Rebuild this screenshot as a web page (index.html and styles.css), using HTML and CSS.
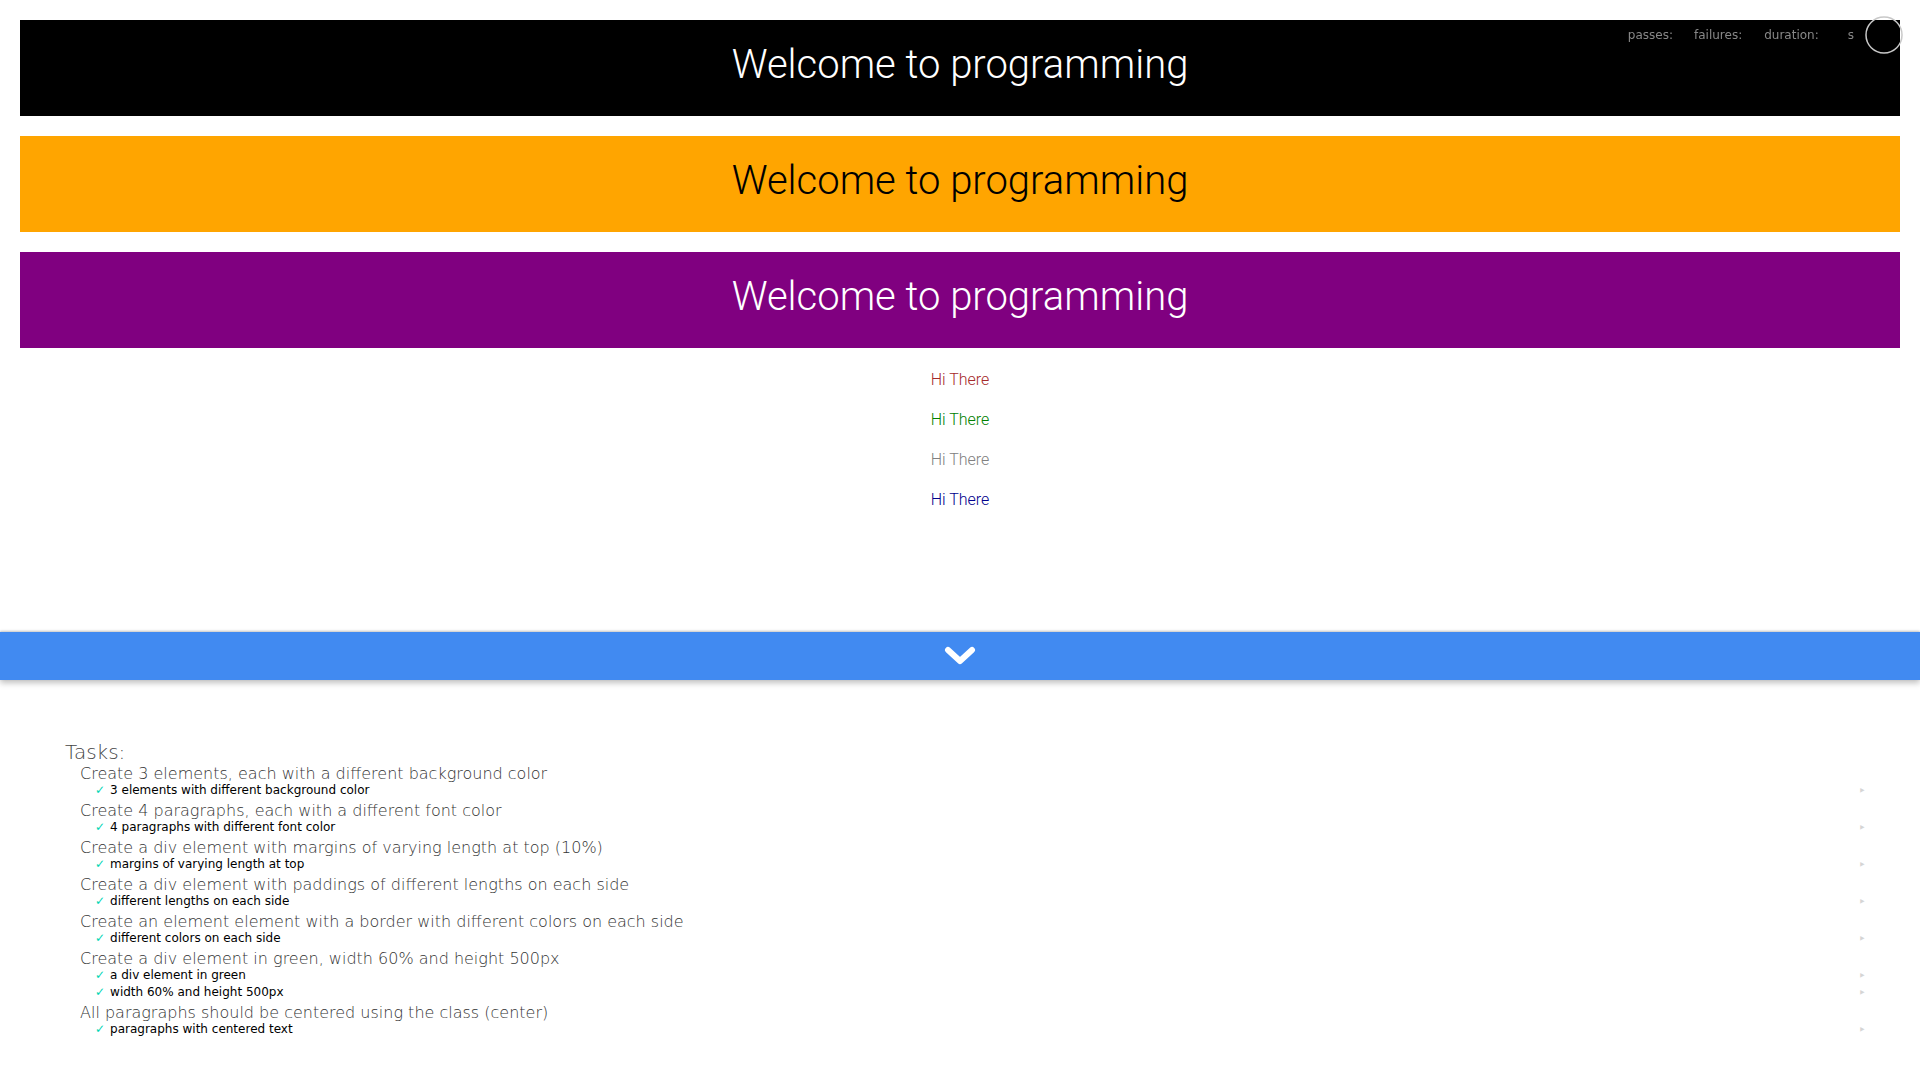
FILE: index.html
```html
<!DOCTYPE html>
<html lang="en">
<head>
<meta charset="utf-8">
<title>Welcome to programming</title>
<link rel="stylesheet" href="styles.css">
</head>
<body>
<main class="content">
  <div class="box box-black">Welcome to programming</div>
  <div class="box box-orange">Welcome to programming</div>
  <div class="box box-purple">Welcome to programming</div>
  <p class="center hi hi-brown">Hi There</p>
  <p class="center hi hi-green">Hi There</p>
  <p class="center hi hi-gray">Hi There</p>
  <p class="center hi hi-blue">Hi There</p>
</main>

<div class="toggle-bar">
  <svg class="chevron" width="32" height="20" viewBox="0 0 32 20" aria-hidden="true">
    <polyline points="4,4 16,15 28,4" fill="none" stroke="#fff" stroke-width="6" stroke-linecap="round" stroke-linejoin="round"/>
  </svg>
</div>

<section class="mocha">
  <h1 class="tasks-title">Tasks:</h1>
  <ul class="suites">
    <li class="suite">
      <h2 class="suite-title">Create 3 elements, each with a different background color</h2>
      <ul class="tests">
        <li class="test"><span class="test-name">3 elements with different background color</span><span class="replay">‣</span></li>
      </ul>
    </li>
    <li class="suite">
      <h2 class="suite-title">Create 4 paragraphs, each with a different font color</h2>
      <ul class="tests">
        <li class="test"><span class="test-name">4 paragraphs with different font color</span><span class="replay">‣</span></li>
      </ul>
    </li>
    <li class="suite">
      <h2 class="suite-title">Create a div element with margins of varying length at top (10%)</h2>
      <ul class="tests">
        <li class="test"><span class="test-name">margins of varying length at top</span><span class="replay">‣</span></li>
      </ul>
    </li>
    <li class="suite">
      <h2 class="suite-title">Create a div element with paddings of different lengths on each side</h2>
      <ul class="tests">
        <li class="test"><span class="test-name">different lengths on each side</span><span class="replay">‣</span></li>
      </ul>
    </li>
    <li class="suite">
      <h2 class="suite-title">Create an element element with a border with different colors on each side</h2>
      <ul class="tests">
        <li class="test"><span class="test-name">different colors on each side</span><span class="replay">‣</span></li>
      </ul>
    </li>
    <li class="suite">
      <h2 class="suite-title">Create a div element in green, width 60% and height 500px</h2>
      <ul class="tests">
        <li class="test"><span class="test-name">a div element in green</span><span class="replay">‣</span></li>
        <li class="test"><span class="test-name">width 60% and height 500px</span><span class="replay">‣</span></li>
      </ul>
    </li>
    <li class="suite">
      <h2 class="suite-title">All paragraphs should be centered using the class (center)</h2>
      <ul class="tests">
        <li class="test"><span class="test-name">paragraphs with centered text</span><span class="replay">‣</span></li>
      </ul>
    </li>
  </ul>
</section>

<div class="stats">
  <span class="stat stat-passes">passes:</span>
  <span class="stat stat-failures">failures:</span>
  <span class="stat stat-duration">duration:</span>
  <span class="stat stat-s">s</span>
  <svg class="progress" width="38" height="38" viewBox="0 0 38 38" aria-hidden="true">
    <circle cx="19" cy="19" r="18" fill="none" stroke="#c8c8c8" stroke-width="1.5"/>
  </svg>
</div>
</body>
</html>
```

FILE: styles.css
```css
html, body {
  margin: 0;
  padding: 0;
  background: #fff;
}

body {
  font-family: Roboto, "Liberation Sans", sans-serif;
  color: #000;
}

.box {
  margin: 20px;
  height: 96px;
  box-sizing: border-box;
  padding-top: 17px;
  font-family: Roboto, sans-serif;
  font-weight: 300;
  font-size: 40px;
  line-height: 56px;
  text-align: center;
}

.box-black { background: #000; color: #fff; }
.box-orange { background: #ffa500; color: #000; }
.box-purple { background: #800080; color: #fff; }

.center { text-align: center; }

.hi {
  margin: 16px 0;
  font-family: Roboto, sans-serif;
  font-weight: 300;
  font-size: 16px;
  line-height: 24px;
}

.hi-brown { color: #a52a2a; }
.hi-green { color: #008000; }
.hi-gray { color: #808080; }
.hi-blue { color: #00008b; }

.toggle-bar {
  margin-top: 120px;
  height: 48px;
  background: #418af1;
  display: flex;
  align-items: center;
  justify-content: center;
  box-shadow: 0 -1px 2px rgba(0, 0, 0, 0.2), 0 3px 6px rgba(0, 0, 0, 0.25);
}

.chevron { display: block; }

.mocha {
  padding: 62px 54px 20px 65px;
  font-family: "DejaVu Sans", sans-serif;
}

.tasks-title {
  margin: 0;
  font-size: 20px;
  line-height: 20px;
  font-weight: 200;
  color: #444;
}

.suites, .tests {
  list-style: none;
  margin: 0;
  padding: 0;
}

.suite-title {
  margin: 3px 0 0 15px;
  font-size: 16px;
  line-height: 17px;
  font-weight: 200;
  color: #333;
}

.tests {
  margin-left: 30px;
}

.test {
  display: flex;
  align-items: center;
  height: 17px;
  font-family: "DejaVu Sans", sans-serif;
  font-size: 12px;
  line-height: 17px;
  color: #000;
}

.test::before {
  content: "✓";
  color: #00d6b2;
  margin-right: 5px;
  font-size: 12px;
}

.replay {
  margin-left: auto;
  color: #888;
  opacity: 0.35;
  font-size: 13px;
}

.stats {
  position: fixed;
  top: 15px;
  right: 17px;
  height: 40px;
  display: flex;
  align-items: center;
  font-family: "DejaVu Sans", sans-serif;
  font-size: 12px;
  color: #888;
}

.stat-passes { margin-right: 21px; }
.stat-failures { margin-right: 22px; }
.stat-duration { margin-right: 29px; }
.stat-s { margin-right: 11px; }

.progress { display: block; }
```
